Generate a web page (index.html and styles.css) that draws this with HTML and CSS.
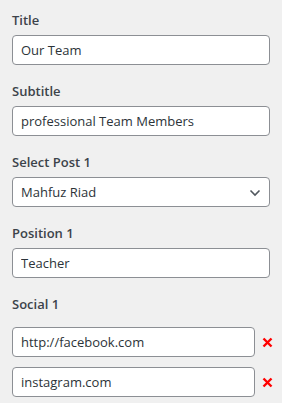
FILE: index.html
```html
<!DOCTYPE html>
<html lang="en">
<head>
    <meta charset="UTF-8">
    <meta name="viewport" content="width=device-width, initial-scale=1.0">
    <title>Team Settings</title>
    <link rel="stylesheet" href="styles.css">
</head>
<body>
    <div class="panel">
        <div class="field">
            <label for="title">Title</label>
            <input type="text" id="title" value="Our Team">
        </div>

        <div class="field">
            <label for="subtitle">Subtitle</label>
            <input type="text" id="subtitle" value="professional Team Members">
        </div>

        <div class="field">
            <label for="post-1">Select Post 1</label>
            <div class="select-wrap">
                <select id="post-1">
                    <option>Mahfuz Riad</option>
                </select>
                <svg class="chevron" width="12" height="8" viewBox="0 0 12 8">
                    <path d="M1.5 1.5 L6 6 L10.5 1.5" fill="none" stroke="#50575e" stroke-width="1.6"/>
                </svg>
            </div>
        </div>

        <div class="field">
            <label for="position-1">Position 1</label>
            <input type="text" id="position-1" value="Teacher">
        </div>

        <div class="field social">
            <label>Social 1</label>
            <div class="social-row">
                <input type="text" value="http://facebook.com">
                <button class="remove" title="Remove">
                    <svg width="11" height="11" viewBox="0 0 11 11">
                        <path d="M1.5 1.5 L9.5 9.5 M9.5 1.5 L1.5 9.5" stroke="#ff0000" stroke-width="2.4"/>
                    </svg>
                </button>
            </div>
            <div class="social-row">
                <input type="text" value="instagram.com">
                <button class="remove" title="Remove">
                    <svg width="11" height="11" viewBox="0 0 11 11">
                        <path d="M1.5 1.5 L9.5 9.5 M9.5 1.5 L1.5 9.5" stroke="#ff0000" stroke-width="2.4"/>
                    </svg>
                </button>
            </div>
        </div>
    </div>
</body>
</html>
```

FILE: styles.css
```css
body {
    margin: 0;
    padding: 0;
    background-color: #f0f0f0;
    font-family: "Open Sans", "Noto Sans", sans-serif;
    color: #1e1e1e;
}

.panel {
    padding: 10px 12px 0;
}

.field {
    margin-bottom: 16px;
}

.field label {
    display: block;
    font-size: 13px;
    font-weight: 600;
    line-height: 20px;
    margin-bottom: 5px;
    color: #3c434a;
}

.field input,
.field select {
    box-sizing: border-box;
    width: 100%;
    height: 30px;
    padding: 0 8px;
    font-family: inherit;
    font-size: 13px;
    color: #2c3338;
    background: #fff;
    border: 1px solid #8c8f94;
    border-radius: 4px;
    outline: none;
}

.select-wrap {
    position: relative;
}

.select-wrap select {
    appearance: none;
    -webkit-appearance: none;
    padding-right: 28px;
}

.chevron {
    position: absolute;
    right: 9px;
    top: 12px;
    pointer-events: none;
}

.social {
    margin-bottom: 0;
}

.social label {
    margin-bottom: 13px;
}

.social-row {
    display: flex;
    align-items: center;
    gap: 7px;
    margin-bottom: 10px;
}

.social-row:last-child {
    margin-bottom: 0;
}

.social-row input {
    width: 243px;
    flex: none;
}

.remove {
    padding: 0;
    border: none;
    background: none;
    cursor: pointer;
    display: flex;
}
```
